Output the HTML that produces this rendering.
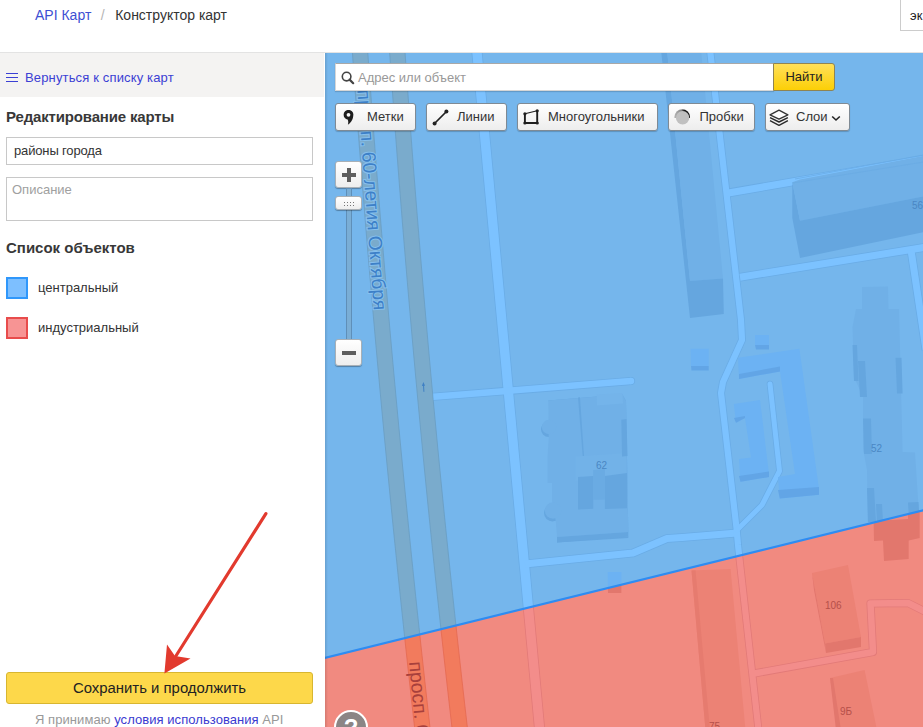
<!DOCTYPE html>
<html><head><meta charset="utf-8">
<style>
*{box-sizing:border-box;margin:0;padding:0}
html,body{width:923px;height:727px;overflow:hidden;background:#fff;font-family:"Liberation Sans",sans-serif;position:relative}
.abs{position:absolute}
.crumb{left:35px;top:7px;font-size:14px;color:#333;white-space:nowrap}
.crumb a{color:#3d4fd3;text-decoration:none}
.crumb .sep{color:#b5b5b5;margin:0 10.5px 0 9.5px}
.topbox{left:900px;top:-2px;width:40px;height:33px;border:1px solid #ccc;font-size:13px;padding:8.5px 0 0 9px;color:#222}
.hline{left:0;top:52px;width:923px;height:1px;background:#e3e3e3}
.side{left:0;top:53px;width:324px;height:674px;background:#fff}
.back{left:0;top:53px;width:324px;height:44px;background:#f4f3f2}
.back span{position:absolute;left:25px;top:17px;font-size:13px;color:#3b40d4;white-space:nowrap;letter-spacing:0.15px}
.burger{left:6px;top:73px;width:12px;height:10px}
.burger i{display:block;height:1px;background:#3b40d4;margin-bottom:3px}
h2{position:absolute;font-size:15px;font-weight:bold;color:#383838;white-space:nowrap;letter-spacing:-0.16px}
.inp{left:6px;width:307px;border:1px solid #c8c8c8;background:#fff;font-size:13px;color:#222;padding:0 0 0 7px}
.swatch{left:6px;width:22px;height:22px}
.li{left:38px;font-size:13px;color:#333;white-space:nowrap}
.save{left:6px;top:672px;width:307px;height:32px;background:#fdd84a;border:1px solid #d8b630;border-radius:3px;font-size:14.9px;color:#222;text-align:center;line-height:30px}
.terms{left:35px;top:711.5px;font-size:13px;color:#999;white-space:nowrap;letter-spacing:0.06px}
.terms a{color:#3a3ad0}
.map{left:325px;top:53px;width:598px;height:674px;overflow:hidden;background:#76b7ec}
.btn{position:absolute;top:50px;height:28px;background:linear-gradient(#fff,#ededed);border:1px solid #7f8a94;border-radius:3px;box-shadow:0 1px 1px rgba(0,0,0,.2);font-size:13px;color:#333;white-space:nowrap;line-height:25px}
.search{position:absolute;left:10px;top:10px;width:439px;height:28px;background:#fff;border:1px solid #d6d6d6;border-top-color:#a8a8a8;box-shadow:0 1px 1px rgba(0,0,0,.15)}
.search .sic{position:absolute;left:5px;top:6.5px}
.search span{position:absolute;left:22px;top:6px;font-size:13px;color:#999;white-space:nowrap}
.find{position:absolute;left:448px;top:10px;width:62px;height:28px;background:linear-gradient(#ffe05a,#fccf06);border:1px solid #8f8453;border-radius:0 3px 3px 0;font-size:13px;color:#222;text-align:center;line-height:25px}
.btn span{position:absolute;top:0}
.zbtn{position:absolute;left:10px;width:27px;background:linear-gradient(#fff,#eee);border:1px solid #a9b0b6;border-radius:3px;box-shadow:0 1px 1px rgba(0,0,0,.3)}
.ztrack{position:absolute;left:21px;top:135px;width:6px;height:152px;background:#7aaed6;border:1px solid #5f8fb8}
.help{position:absolute;left:9px;top:657px;width:34px;height:34px;border-radius:50%;background:#8b8585;border:2px solid #fff;color:#fff;font:bold 24px "Liberation Sans",sans-serif;text-align:center;line-height:31px}
.mshadow{position:absolute;left:0;top:0;width:3px;height:674px;background:linear-gradient(90deg,rgba(0,0,0,.12),rgba(0,0,0,0))}
</style></head><body>
<div class="abs crumb"><a>API Карт</a><span class="sep">/</span>Конструктор карт</div>
<div class="abs topbox">эк</div>
<div class="abs hline"></div>
<div class="abs back"><span>Вернуться к списку карт</span></div>
<div class="abs burger"><i></i><i></i><i></i></div>
<h2 style="left:6px;top:108px">Редактирование карты</h2>
<div class="abs inp" style="top:137px;height:28px;line-height:26px;letter-spacing:-0.15px;color:#333">районы города</div>
<div class="abs inp" style="top:177px;height:44px;padding-top:3.5px;padding-left:5px;color:#a0a0a0">Описание</div>
<h2 style="left:6px;top:239px;letter-spacing:0">Список объектов</h2>
<div class="abs swatch" style="top:277px;background:#7dbfff;border:2px solid #2f97fb"></div>
<div class="abs li" style="top:280px">центральный</div>
<div class="abs swatch" style="top:317px;background:#f79494;border:2px solid #e84c4c"></div>
<div class="abs li" style="top:320px">индустриальный</div>
<div class="abs save">Сохранить и продолжить</div>
<div class="abs terms">Я принимаю <a>условия использования</a> API</div>

<div class="abs map">
<svg width="598" height="674" viewBox="325 53 598 674" style="position:absolute;left:0;top:0">
<defs><clipPath id="cb"><polygon points="325,53 923,53 923,510.314 325,657.9"/></clipPath><clipPath id="cr"><polygon points="325,657.9 923,510.314 923,727 325,727"/></clipPath></defs>
<g clip-path="url(#cb)">
<rect x="325" y="53" width="598" height="674" fill="#75b6ec"/>
<polygon points="351.846,45 352.917,60 354.002,75 355.101,90 356.214,105 357.34,120 358.481,135 359.635,150 360.803,165 361.985,180 363.181,195 364.391,210 365.614,225 366.852,240 368.103,255 369.368,270 370.647,285 371.939,300 373.246,315 374.566,330 375.901,345 377.249,360 378.611,375 379.986,390 381.376,405 382.78,420 384.197,435 385.628,450 387.073,465 388.532,480 390.005,495 391.491,510 392.991,525 394.506,540 396.034,555 397.576,570 399.131,585 400.701,600 402.284,615 403.882,630 405.493,645 407.118,660 408.756,675 410.409,690 412.076,705 413.756,720 415.45,735 430.85,735 429.156,720 427.476,705 425.809,690 424.156,675 422.518,660 420.893,645 419.282,630 417.684,615 416.101,600 414.531,585 412.976,570 411.434,555 409.906,540 408.391,525 406.891,510 405.405,495 403.932,480 402.473,465 401.028,450 399.597,435 398.18,420 396.776,405 395.386,390 394.011,375 392.649,360 391.301,345 389.966,330 388.646,315 387.339,300 386.047,285 384.768,270 383.503,255 382.252,240 381.014,225 379.791,210 378.581,195 377.385,180 376.203,165 375.035,150 373.881,135 372.74,120 371.614,105 370.501,90 369.402,75 368.317,60 367.246,45" fill="#7aabcc" stroke="#6a9dc2" stroke-width="0.8"/>
<polygon points="389.123,45 390.162,60 391.216,75 392.286,90 393.371,105 394.471,120 395.587,135 396.718,150 397.865,165 399.027,180 400.204,195 401.397,210 402.605,225 403.829,240 405.068,255 406.322,270 407.591,285 408.876,300 410.177,315 411.493,330 412.824,345 414.171,360 415.532,375 416.91,390 418.303,405 419.711,420 421.134,435 422.573,450 424.027,465 425.497,480 426.982,495 428.482,510 429.998,525 431.53,540 433.076,555 434.638,570 436.215,585 437.808,600 439.416,615 441.04,630 442.679,645 444.333,660 446.003,675 447.688,690 449.388,705 451.104,720 452.835,735 468.235,735 466.504,720 464.788,705 463.088,690 461.403,675 459.733,660 458.079,645 456.44,630 454.816,615 453.208,600 451.615,585 450.038,570 448.476,555 446.93,540 445.398,525 443.882,510 442.382,495 440.897,480 439.427,465 437.973,450 436.534,435 435.111,420 433.703,405 432.31,390 430.932,375 429.571,360 428.224,345 426.893,330 425.577,315 424.276,300 422.991,285 421.722,270 420.468,255 419.229,240 418.005,225 416.797,210 415.604,195 414.427,180 413.265,165 412.118,150 410.987,135 409.871,120 408.771,105 407.686,90 406.616,75 405.562,60 404.523,45" fill="#7aabcc" stroke="#6a9dc2" stroke-width="0.8"/>
<polyline points="476.3,45 539.7,730" fill="none" stroke="#6aace6" stroke-width="11" stroke-linejoin="round" stroke-linecap="butt"/>
<polyline points="433.5,396.8 631,381" fill="none" stroke="#6aace6" stroke-width="8.1" stroke-linejoin="round" stroke-linecap="butt"/>
<polyline points="525,564 633,553 667,538.5 682,537.5 737,533" fill="none" stroke="#6aace6" stroke-width="8.6" stroke-linejoin="round" stroke-linecap="butt"/>
<polyline points="709.5,45 741,320 742,340 723,382 721,393 736.5,528 738,545 758.5,730" fill="none" stroke="#6aace6" stroke-width="7.8" stroke-linejoin="round" stroke-linecap="butt"/>
<polyline points="727,193.2 925,159" fill="none" stroke="#6aace6" stroke-width="8.8" stroke-linejoin="round" stroke-linecap="butt"/>
<polyline points="740,277.2 925,247.3" fill="none" stroke="#6aace6" stroke-width="8.6" stroke-linejoin="round" stroke-linecap="butt"/>
<polyline points="911,250 926,350" fill="none" stroke="#6aace6" stroke-width="8.6" stroke-linejoin="round" stroke-linecap="butt"/>
<polyline points="737,530 762,505 779.5,471 770,384" fill="none" stroke="#6aace6" stroke-width="6.6" stroke-linejoin="round" stroke-linecap="round"/>
<polyline points="754,673.5 873,652 870.5,603.5 908,603 930,614" fill="none" stroke="#6aace6" stroke-width="8.1" stroke-linejoin="round" stroke-linecap="butt"/>
<circle cx="631" cy="381" r="4.05" fill="#6aace6"/>
<polyline points="476.3,45 539.7,730" fill="none" stroke="#7cc2ff" stroke-width="9.4" stroke-linejoin="round" stroke-linecap="butt"/>
<polyline points="433.5,396.8 631,381" fill="none" stroke="#7cc2ff" stroke-width="6.5" stroke-linejoin="round" stroke-linecap="butt"/>
<polyline points="525,564 633,553 667,538.5 682,537.5 737,533" fill="none" stroke="#7cc2ff" stroke-width="7" stroke-linejoin="round" stroke-linecap="butt"/>
<polyline points="709.5,45 741,320 742,340 723,382 721,393 736.5,528 738,545 758.5,730" fill="none" stroke="#7cc2ff" stroke-width="6.2" stroke-linejoin="round" stroke-linecap="butt"/>
<polyline points="727,193.2 925,159" fill="none" stroke="#7cc2ff" stroke-width="7.2" stroke-linejoin="round" stroke-linecap="butt"/>
<polyline points="740,277.2 925,247.3" fill="none" stroke="#7cc2ff" stroke-width="7" stroke-linejoin="round" stroke-linecap="butt"/>
<polyline points="911,250 926,350" fill="none" stroke="#7cc2ff" stroke-width="7" stroke-linejoin="round" stroke-linecap="butt"/>
<polyline points="737,530 762,505 779.5,471 770,384" fill="none" stroke="#7cc2ff" stroke-width="5" stroke-linejoin="round" stroke-linecap="round"/>
<polyline points="754,673.5 873,652 870.5,603.5 908,603 930,614" fill="none" stroke="#7cc2ff" stroke-width="6.5" stroke-linejoin="round" stroke-linecap="butt"/>
<circle cx="631" cy="381" r="3.25" fill="#7cc2ff"/>
<polygon points="661,50 667,50 690,281 690,318" fill="#65a6df" />
<polygon points="667,50 701,50 723,278.6 690,281" fill="#70b0e7" />
<polygon points="690,281 723,278.6 723.8,314 690,318" fill="#65a6df" />
<polygon points="792.3,182.3 800,220.8 800,258 792.3,218" fill="#65a6df" />
<polygon points="792.3,182.3 800,179.5 925,155.5 925,196 800,220.8" fill="#70b0e7" />
<line x1="792.3" y1="183" x2="925" y2="161.8" stroke="#69abe3" stroke-width="0.8"/>
<line x1="795" y1="179" x2="925" y2="154.6" stroke="#6aace6" stroke-width="0.8"/>
<polygon points="800,220.8 925,196 925,231.8 800,258" fill="#65a6df" />
<polygon points="862,287 888,286.5 888.5,309 899,309 902.6,452 915,452.5 920,530 868,530 867,470 863,449 863,397 854,377 852.5,327 856,309 862,309" fill="#70b0e7" />
<polygon points="852.5,345 857,345 858.5,381 854,381" fill="#65a6df" />
<polygon points="858,361 865,361 867,397 860,397" fill="#65a6df" />
<polygon points="863,418.5 871,418.5 872,454 864,454" fill="#65a6df" />
<polygon points="895.5,357.7 901.5,357.7 902.6,393.4 897,393.4" fill="#65a6df" />
<polygon points="867,488 874,488 876,522 868,522" fill="#65a6df" />
<polygon points="876,504 882,504 883,522 877,522" fill="#65a6df" />
<polygon points="908,502.6 918.5,502 919.5,520 909,520" fill="#65a6df" />
<polygon points="690.6,348.7 708.7,348.7 708.7,366 691,366" fill="#6cb2f3" />
<polygon points="691,366 708.7,366 708.7,370.5 691.5,370.5" fill="#62a5e6" />
<polygon points="755,335 769,335 769,345 755,345" fill="#6cb2f3" />
<polygon points="755,345 769,345 769,349.5 756,349.5" fill="#62a5e6" />
<polygon points="738,357.8 799.4,348.7 819,489 819,494.8 779.8,498.4 778,477 795,474 780,371.4 739,379" fill="#6cb2f3" />
<polygon points="739,374 780,366.5 780,371.4 739,379" fill="#62a5e6" />
<polygon points="778,490 819,487 819,494.8 779.8,498.4" fill="#62a5e6" />
<polygon points="733.8,404 760,400 769,474 769,477 740.5,481.8 739,459 751,457.6 745,418 736,422.8" fill="#6cb2f3" />
<polygon points="739,476 769,471.5 769,477 740.5,481.8" fill="#62a5e6" />
<polygon points="734,418 745,416 745,418 736,422.8" fill="#62a5e6" />
<circle cx="548.5" cy="429.5" r="7.5" fill="#65a6df"/><circle cx="552.5" cy="513" r="8.5" fill="#65a6df"/>
<polygon points="548.3,400.6 622.4,394.5 626,401 628.3,532 628.3,536 557,537.5 557,542.6 628.3,538 628.3,532" fill="#65a6df" />
<polygon points="548.3,400.6 622.4,394.5 626,401 628.3,532 557,537 555.7,520.4 552,500.5 552,483 547.5,483 547.5,457 548.7,438.5 548.5,416" fill="#70b0e7" />
<circle cx="549" cy="427" r="7.2" fill="#70b0e7"/><circle cx="553" cy="510.5" r="8.2" fill="#70b0e7"/>
<polygon points="557,537 628.3,532 628.3,536.5 557,542.6" fill="#65a6df" />
<polygon points="596.7,394.5 622.4,393 623,403.4 597,405.5" fill="#74b4ea" />
<polygon points="575.6,456.5 626,453 626,478.3 575.6,481" fill="#72b2e8" />
<polygon points="578,477 593.2,476 593.2,508.7 578,509.5" fill="#65a6df" />
<polygon points="604.9,476 627,473 627,508.2 604.9,509" fill="#65a6df" />
<polygon points="593.2,470 604.9,469 604.9,499.4 593.2,499.8" fill="#6aabe3" />
<polygon points="621.3,419.8 626.5,419 627.5,456 622,456.5" fill="#65a6df" />
<polygon points="578,397.5 580,397.3 584,456 582.7,456" fill="#65a6df" />
<polygon points="607.7,572 621.4,572 621.4,595 608,595" fill="#6cb2f3" />
<text transform="translate(357.3,90.1) rotate(85.7)" font-family="Liberation Sans" font-size="19.2" fill="#3d80c8" stroke="#86c0ee" stroke-width="2" paint-order="stroke">просп. 60-летия Октября</text>
<g font-family="Liberation Sans" font-size="10" fill="#4a87c4"><text x="596" y="469">62</text><text x="871" y="452">52</text><text x="912" y="209">56</text></g>
<path d="M423.9,391.8 L423.5,385" stroke="#3f80c4" stroke-width="1" fill="none"/><path d="M423.4,382 L425,385.8 L421.9,385.9 Z" fill="#3f80c4"/>
</g>
<g clip-path="url(#cr)">
<rect x="325" y="53" width="598" height="674" fill="#f18a80"/>
<polygon points="351.846,45 352.917,60 354.002,75 355.101,90 356.214,105 357.34,120 358.481,135 359.635,150 360.803,165 361.985,180 363.181,195 364.391,210 365.614,225 366.852,240 368.103,255 369.368,270 370.647,285 371.939,300 373.246,315 374.566,330 375.901,345 377.249,360 378.611,375 379.986,390 381.376,405 382.78,420 384.197,435 385.628,450 387.073,465 388.532,480 390.005,495 391.491,510 392.991,525 394.506,540 396.034,555 397.576,570 399.131,585 400.701,600 402.284,615 403.882,630 405.493,645 407.118,660 408.756,675 410.409,690 412.076,705 413.756,720 415.45,735 430.85,735 429.156,720 427.476,705 425.809,690 424.156,675 422.518,660 420.893,645 419.282,630 417.684,615 416.101,600 414.531,585 412.976,570 411.434,555 409.906,540 408.391,525 406.891,510 405.405,495 403.932,480 402.473,465 401.028,450 399.597,435 398.18,420 396.776,405 395.386,390 394.011,375 392.649,360 391.301,345 389.966,330 388.646,315 387.339,300 386.047,285 384.768,270 383.503,255 382.252,240 381.014,225 379.791,210 378.581,195 377.385,180 376.203,165 375.035,150 373.881,135 372.74,120 371.614,105 370.501,90 369.402,75 368.317,60 367.246,45" fill="#f27b5d" stroke="#e46a50" stroke-width="0.8"/>
<polygon points="389.123,45 390.162,60 391.216,75 392.286,90 393.371,105 394.471,120 395.587,135 396.718,150 397.865,165 399.027,180 400.204,195 401.397,210 402.605,225 403.829,240 405.068,255 406.322,270 407.591,285 408.876,300 410.177,315 411.493,330 412.824,345 414.171,360 415.532,375 416.91,390 418.303,405 419.711,420 421.134,435 422.573,450 424.027,465 425.497,480 426.982,495 428.482,510 429.998,525 431.53,540 433.076,555 434.638,570 436.215,585 437.808,600 439.416,615 441.04,630 442.679,645 444.333,660 446.003,675 447.688,690 449.388,705 451.104,720 452.835,735 468.235,735 466.504,720 464.788,705 463.088,690 461.403,675 459.733,660 458.079,645 456.44,630 454.816,615 453.208,600 451.615,585 450.038,570 448.476,555 446.93,540 445.398,525 443.882,510 442.382,495 440.897,480 439.427,465 437.973,450 436.534,435 435.111,420 433.703,405 432.31,390 430.932,375 429.571,360 428.224,345 426.893,330 425.577,315 424.276,300 422.991,285 421.722,270 420.468,255 419.229,240 418.005,225 416.797,210 415.604,195 414.427,180 413.265,165 412.118,150 410.987,135 409.871,120 408.771,105 407.686,90 406.616,75 405.562,60 404.523,45" fill="#f27b5d" stroke="#e46a50" stroke-width="0.8"/>
<polyline points="476.3,45 539.7,730" fill="none" stroke="#e27a78" stroke-width="11" stroke-linejoin="round" stroke-linecap="butt"/>
<polyline points="433.5,396.8 631,381" fill="none" stroke="#e27a78" stroke-width="8.1" stroke-linejoin="round" stroke-linecap="butt"/>
<polyline points="525,564 633,553 667,538.5 682,537.5 737,533" fill="none" stroke="#e27a78" stroke-width="8.6" stroke-linejoin="round" stroke-linecap="butt"/>
<polyline points="709.5,45 741,320 742,340 723,382 721,393 736.5,528 738,545 758.5,730" fill="none" stroke="#e27a78" stroke-width="7.8" stroke-linejoin="round" stroke-linecap="butt"/>
<polyline points="727,193.2 925,159" fill="none" stroke="#e27a78" stroke-width="8.8" stroke-linejoin="round" stroke-linecap="butt"/>
<polyline points="740,277.2 925,247.3" fill="none" stroke="#e27a78" stroke-width="8.6" stroke-linejoin="round" stroke-linecap="butt"/>
<polyline points="911,250 926,350" fill="none" stroke="#e27a78" stroke-width="8.6" stroke-linejoin="round" stroke-linecap="butt"/>
<polyline points="737,530 762,505 779.5,471 770,384" fill="none" stroke="#e27a78" stroke-width="6.6" stroke-linejoin="round" stroke-linecap="round"/>
<polyline points="754,673.5 873,652 870.5,603.5 908,603 930,614" fill="none" stroke="#e27a78" stroke-width="8.1" stroke-linejoin="round" stroke-linecap="butt"/>
<circle cx="631" cy="381" r="4.05" fill="#e27a78"/>
<polyline points="476.3,45 539.7,730" fill="none" stroke="#f38d8b" stroke-width="9.4" stroke-linejoin="round" stroke-linecap="butt"/>
<polyline points="433.5,396.8 631,381" fill="none" stroke="#f38d8b" stroke-width="6.5" stroke-linejoin="round" stroke-linecap="butt"/>
<polyline points="525,564 633,553 667,538.5 682,537.5 737,533" fill="none" stroke="#f38d8b" stroke-width="7" stroke-linejoin="round" stroke-linecap="butt"/>
<polyline points="709.5,45 741,320 742,340 723,382 721,393 736.5,528 738,545 758.5,730" fill="none" stroke="#f38d8b" stroke-width="6.2" stroke-linejoin="round" stroke-linecap="butt"/>
<polyline points="727,193.2 925,159" fill="none" stroke="#f38d8b" stroke-width="7.2" stroke-linejoin="round" stroke-linecap="butt"/>
<polyline points="740,277.2 925,247.3" fill="none" stroke="#f38d8b" stroke-width="7" stroke-linejoin="round" stroke-linecap="butt"/>
<polyline points="911,250 926,350" fill="none" stroke="#f38d8b" stroke-width="7" stroke-linejoin="round" stroke-linecap="butt"/>
<polyline points="737,530 762,505 779.5,471 770,384" fill="none" stroke="#f38d8b" stroke-width="5" stroke-linejoin="round" stroke-linecap="round"/>
<polyline points="754,673.5 873,652 870.5,603.5 908,603 930,614" fill="none" stroke="#f38d8b" stroke-width="6.5" stroke-linejoin="round" stroke-linecap="butt"/>
<circle cx="631" cy="381" r="3.25" fill="#f38d8b"/>
<polygon points="691.5,570.5 730.6,569 745.5,730 705.5,730" fill="#ec8275" />
<polygon points="691.5,570.5 695.5,570.3 710,730 705.5,730" fill="#e67b6f" />
<polygon points="812,573 848,565 861,637 825,643.4" fill="#ec8275" />
<polygon points="812,573 825,643.4 826,653 814,590" fill="#e2776d" />
<polygon points="825,643.4 861,637 861,647 826,653" fill="#e2776d" />
<polygon points="830,678 864.6,670 877,730 838,730" fill="#ec8275" />
<polygon points="830,678 833,678 841,730 836,730" fill="#e2776d" />
<polygon points="873.6,521 908,519 908,513 919.7,511 919.7,538 908.7,540.5 908.7,559 884,561 883,540.5 874,541" fill="#e2776d" />
<polygon points="607.7,572 621.4,572 621.4,593 608,593" fill="#e2776d" />
<text transform="translate(409.1,662) rotate(84.66)" font-family="Liberation Sans" font-size="19.5" fill="#a8403c">просп. 60-летия Октября</text>
<g font-family="Liberation Sans" font-size="10" fill="#b5504a"><text x="825" y="609">106</text><text x="840" y="715">9Б</text><text x="709" y="730">75</text></g>
</g>
<line x1="320" y1="659.134" x2="930" y2="508.586" stroke="#2e8cf2" stroke-width="2.2"/>
</svg>
<div class="search"><svg class="sic" width="14" height="14" viewBox="0 0 14 14"><circle cx="5.6" cy="5.6" r="4.3" fill="none" stroke="#444" stroke-width="1.6"/><path d="M8.6,8.6 L12.2,12.2" stroke="#444" stroke-width="2.2" stroke-linecap="round"/></svg><span>Адрес или объект</span></div>
<div class="find">Найти</div>
<div class="btn" style="left:10px;width:81px"><svg style="position:absolute;left:7px;top:6px" width="12" height="16" viewBox="0 0 12 16"><path d="M10.2,6.2 C9.8,10 7.6,12.9 4.9,14.8 C5.4,12.8 5.5,11.2 4.6,9.6 Z" fill="#1e1e1e"/><circle cx="5.5" cy="4.8" r="3.4" fill="none" stroke="#1e1e1e" stroke-width="3"/></svg><span style="left:31px">Метки</span></div>
<div class="btn" style="left:101px;width:81px"><svg style="position:absolute;left:4.5px;top:4.5px" width="17" height="17" viewBox="0 0 17 17"><path d="M2.5,14.5 L14.5,2.5" stroke="#222" stroke-width="1.7"/><circle cx="2.6" cy="14.4" r="2" fill="#222"/><circle cx="14.4" cy="2.6" r="2" fill="#222"/></svg><span style="left:30px">Линии</span></div>
<div class="btn" style="left:192px;width:141px"><svg style="position:absolute;left:5px;top:5px" width="18" height="18" viewBox="0 0 18 18"><path d="M1.9,4.8 L14.2,1.7" stroke="#1e1e1e" stroke-width="1.1" fill="none"/><path d="M1.9,4.8 L1.9,14 L14.2,14 L14.2,1.7" stroke="#1e1e1e" stroke-width="1.9" fill="none"/><circle cx="1.9" cy="4.8" r="1.6" fill="#1e1e1e"/><circle cx="14.2" cy="1.8" r="1.6" fill="#1e1e1e"/><circle cx="14.2" cy="14" r="1.6" fill="#1e1e1e"/><circle cx="1.9" cy="14" r="1.6" fill="#1e1e1e"/></svg><span style="left:30px">Многоугольники</span></div>
<div class="btn" style="left:343px;width:87px"><svg style="position:absolute;left:5px;top:5px" width="18" height="17" viewBox="0 0 18 17"><defs><linearGradient id="pg" x1="0" y1="0" x2="1" y2="0"><stop offset="0" stop-color="#b4b4b4"/><stop offset="0.45" stop-color="#888"/><stop offset="0.62" stop-color="#1a1a1a"/><stop offset="1" stop-color="#111"/></linearGradient><clipPath id="pc"><rect x="0" y="0" width="18" height="9"/></clipPath></defs><circle cx="8.2" cy="8" r="7.8" fill="url(#pg)" clip-path="url(#pc)"/><circle cx="8.6" cy="8.7" r="6.7" fill="#c0c0c0"/></svg><span style="left:30.5px">Пробки</span></div>
<div class="btn" style="left:440px;width:85px"><svg style="position:absolute;left:0;top:0.6px" width="26" height="24" viewBox="0 0 26 24"><path d="M4,15.7 L13,20.3 L21.9,15.7" fill="none" stroke="#2a2a2a" stroke-width="1.4" stroke-linejoin="round"/><path d="M4,12.65 L13,17 L21.9,12.65" fill="none" stroke="#2a2a2a" stroke-width="1.4" stroke-linejoin="round"/><path d="M13,5.2 L21.9,9.8 L13,14.1 L4,9.8 Z" fill="#fdfdfd" stroke="#333" stroke-width="1.3" stroke-linejoin="round"/></svg><span style="left:30px">Слои</span><svg style="position:absolute;left:65px;top:10.5px" width="10" height="7" viewBox="0 0 10 7"><path d="M1.2,1.5 L5,5 L8.8,1.5" fill="none" stroke="#222" stroke-width="1.6"/></svg></div>
<div class="zbtn" style="top:108px;height:27px"><i style="position:absolute;left:6px;top:11px;width:14px;height:4px;background:#5e5e5e"></i><i style="position:absolute;left:11px;top:6px;width:4px;height:14px;background:#5e5e5e"></i></div>
<div class="ztrack"></div>
<div class="zbtn" style="top:143px;height:14px"><svg style="position:absolute;left:0;top:0" width="25" height="12" viewBox="0 0 25 12"><g fill="#777"><rect x="8" y="5" width="1" height="1"/><rect x="11" y="5" width="1" height="1"/><rect x="14" y="5" width="1" height="1"/><rect x="17" y="5" width="1" height="1"/><rect x="8" y="8" width="1" height="1"/><rect x="11" y="8" width="1" height="1"/><rect x="14" y="8" width="1" height="1"/><rect x="17" y="8" width="1" height="1"/></g></svg></div>
<div class="zbtn" style="top:286px;height:27px"><i style="position:absolute;left:6px;top:11px;width:14px;height:4px;background:#5e5e5e"></i></div>
<div class="help">?</div>
<div class="mshadow"></div>

</div>
<svg class="abs" style="left:0;top:0" width="323" height="727" viewBox="0 0 323 727"><path d="M265.9,513.6 L174,659" stroke="#e23a2e" stroke-width="3.2" stroke-linecap="round"/><path d="M164.4,673.4 L167,644.5 L175,656 L190.5,658.5 Z" fill="#e23a2e"/></svg>
</body></html>
